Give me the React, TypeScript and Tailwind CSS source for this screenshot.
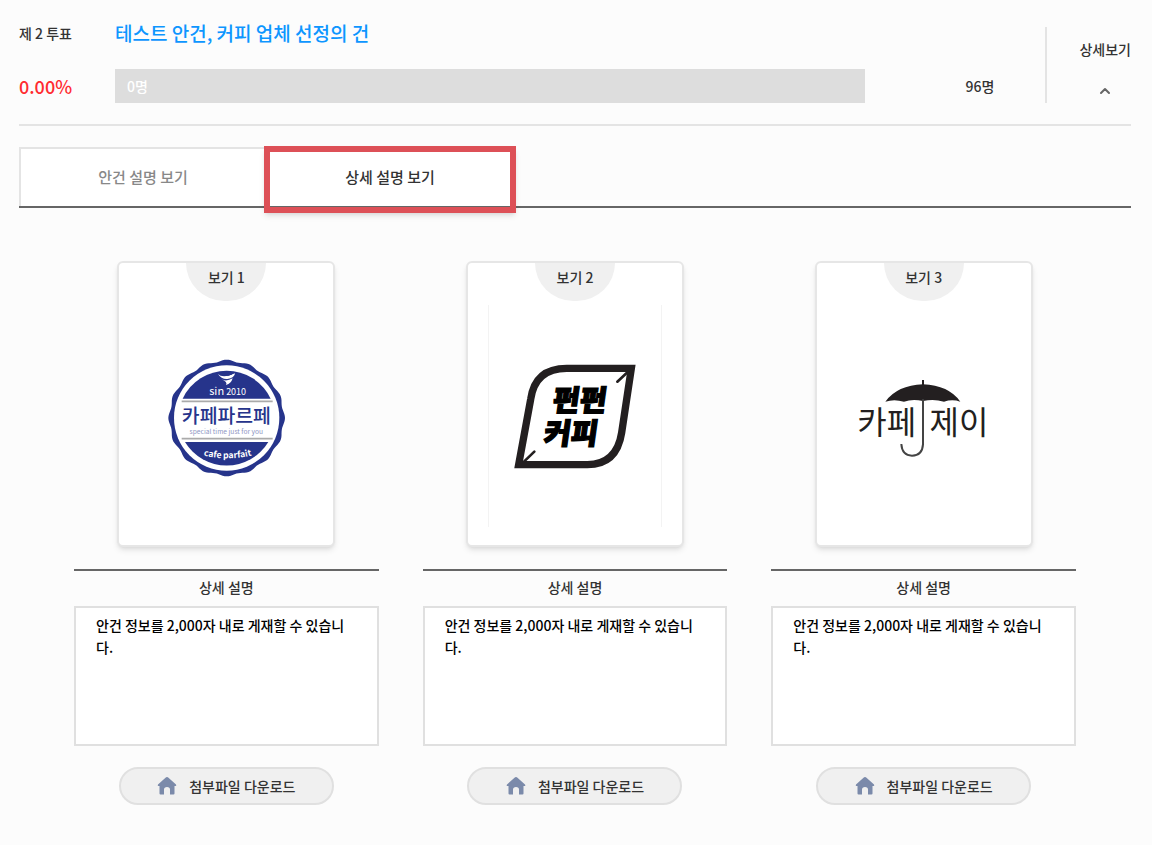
import React, { useState } from "react";
import { ChevronUp } from "lucide-react";

const FONT = "font-['Noto_Sans_CJK_KR',sans-serif]";

// Wavy outline of the round stamp logo
const stampPath = (cx: number, cy: number, radius: number, depth: number, waves: number) => {
    const points: string[] = [];
    for (let i = 0; i < 360; i += 2) {
        const angle = (i * Math.PI) / 180;
        const r = radius - depth + depth * Math.cos(angle * waves);
        points.push(`${(cx + r * Math.cos(angle)).toFixed(1)} ${(cy + r * Math.sin(angle)).toFixed(1)}`);
    }
    return `M${points.join("L")}Z`;
};

function ParfaitLogo() {
    return (
        <svg width="140" height="140" viewBox="0 0 420 420" role="img" className={FONT}>
            <path d={stampPath(212, 216, 175, 3, 16)} fill="#26348b" />
            <circle cx="212" cy="216" r="158" fill="#fff" />
            <path d="M80 158A146 146 0 0 1 344 158Z" fill="#26348b" />
            <path d="M87 288H337A146 146 0 0 1 87 288Z" fill="#26348b" />
            <path d="M77 166H350M77 278H350" stroke="#aaa" strokeWidth="5" />
            <path d="M186 84Q200 98 237 82Q236 96 214 99Q196 100 186 84Z" fill="#fff" />
            <path d="M196 100Q212 108 230 97Q226 112 210 117Q216 108 196 100Z" fill="#fff" />
            <path d="M202 86Q216 92 228 84" fill="none" stroke="#26348b" strokeWidth="3" />
            <text x="215" y="147" textAnchor="middle" fontSize="27" fill="#fff">
                <tspan fontSize="33">sin</tspan> 2010
            </text>
            <text x="211" y="231" textAnchor="middle" fontSize="58" fontWeight="500" fill="#26348b">카페파르페</text>
            <text x="211" y="265" textAnchor="middle" fontSize="20" fill="#8f97c4">special time just for you</text>
            <path id="stamp-curve" d="M120 322Q215 352 310 322" fill="none" />
            <text fontSize="26" fontWeight="700" fill="#fff" textAnchor="middle">
                <textPath href="#stamp-curve" startOffset="50%">cafe parfait</textPath>
            </text>
        </svg>
    );
}

function PunpunLogo() {
    return (
        <svg width="150" height="130" viewBox="0 0 450 390" role="img" className={FONT}>
            <path
                d="M394 52H200Q105 52 92 145L56 341H262Q350 341 365 245Z"
                fill="none"
                stroke="#231f20"
                strokeWidth="22"
            />
            <path d="M352 92L384 62M72 332L103 302" stroke="#231f20" strokeWidth="8" strokeLinecap="round" />
            <g fontSize="88" fontWeight="900" fill="#000" stroke="#000" strokeWidth="4" textAnchor="middle">
                <text x="261" y="180" transform="skewX(-8)">펀펀</text>
                <text x="248" y="278" transform="skewX(-8)">커피</text>
            </g>
        </svg>
    );
}

function CafeJLogo() {
    return (
        <svg width="160" height="100" viewBox="0 0 480 300" role="img" className={FONT}>
            <path d="M237 42V60" stroke="#231f20" strokeWidth="6" />
            <path
                d="M124 107Q160 58 237 55Q314 58 349 107Q325 99 300 107Q270 98 237 105Q205 98 180 107Q150 98 124 107Z"
                fill="#231f20"
            />
            <path d="M237 100V235Q235 268 204 269Q174 268 172 234" fill="none" stroke="#444" strokeWidth="6" />
            <g fontSize="96" fontWeight="400" fill="#231f20" textAnchor="middle">
                <text x="128" y="204">카페</text>
                <text x="345" y="204">제이</text>
            </g>
        </svg>
    );
}

function HomeIcon() {
    return (
        <svg width="20" height="20" viewBox="0 0 20 20" fill="#7b8aaa" aria-hidden="true">
            <path d="M10 1Q10.800 1 11.500 1.700L19 8.500Q19.800 10 18.500 10H17.500V17.500Q17.500 18.500 16.500 18.500H13V13.500Q13 11 10 11Q7 11 7 13.500V18.500H3.500Q2.500 18.500 2.500 17.500V10H1.500Q.200 10 1 8.500L8.500 1.700Q9.200 1 10 1Z" />
        </svg>
    );
}

const choices = [
    { id: 1, logo: <ParfaitLogo />, framed: false },
    { id: 2, logo: <PunpunLogo />, framed: true },
    { id: 3, logo: <CafeJLogo />, framed: false },
];

function ChoiceCard({ choice }) {
    return (
        <div className="flex flex-col items-center">
            <div className="flex flex-col items-center w-[218px] h-[286px] bg-white border-2 border-[#e6e6e6] rounded-md shadow-md">
                <h2 className="w-20 h-[38px] pt-1 rounded-b-full bg-[#f0f0f0] text-center text-sm font-medium">
                    보기 {choice.id}
                </h2>
                <div
                    className={`flex items-center justify-center w-[174px] h-[222px] mt-1 ${
                        choice.framed ? "border-x border-[#f3f3f3]" : ""
                    }`}
                >
                    {choice.logo}
                </div>
            </div>
            <h3 className="w-full h-[37px] mt-[22px] border-t-2 border-[#666] text-center text-sm leading-8 font-medium">
                상세 설명
            </h3>
            <p className="w-full h-[140px] px-5 py-1.5 bg-white border-2 border-[#e0e0e0] text-sm leading-[22px] font-medium text-black">
                안건 정보를 2,000자 내로 게재할 수 있습니다.
            </p>
            <button
                type="button"
                className="flex items-center justify-center gap-3 w-[215px] h-[38px] mt-[21px] rounded-full border-2 border-[#e0e0e0] bg-[#f0f0f0] text-sm font-medium"
            >
                <HomeIcon />
                첨부파일 다운로드
            </button>
        </div>
    );
}

export default function App() {
    const [tab, setTab] = useState("detail");

    return (
        <main className={`min-h-screen pl-[19px] pr-[21px] pt-[27px] pb-10 bg-[#fcfcfc] text-[#333] ${FONT}`}>
            <header className="flex pb-[21px] border-b-2 border-[#e4e4e4]">
                <div className="flex flex-col justify-between flex-1 h-[76px]">
                    <div className="flex items-center h-3">
                        <span className="w-24 text-sm font-medium">제 2 투표</span>
                        <h1 className="text-[19px] font-medium text-[#0d96ff]">테스트 안건, 커피 업체 선정의 건</h1>
                    </div>
                    <div className="flex items-center">
                        <span className="w-24 text-lg font-medium text-[#ff2b30]">0.00%</span>
                        <div className="flex items-center flex-1 h-[34px] px-3 bg-[#ddd] text-sm font-medium text-white">
                            0명
                        </div>
                        <span className="w-[180px] pl-[100px] text-sm font-medium">96명</span>
                    </div>
                </div>
                <button
                    type="button"
                    className="flex flex-col items-center gap-6 pt-3 pl-8 border-l-2 border-[#e4e4e4] text-sm font-medium"
                >
                    상세보기
                    <ChevronUp size={16} strokeWidth={3} className="text-[#666]" />
                </button>
            </header>

            <div role="tablist" className="flex h-[61px] mt-[21px] border-b-2 border-[#666] text-[15px] font-medium">
                <button
                    type="button"
                    role="tab"
                    aria-selected={tab === "info"}
                    onClick={() => setTab("info")}
                    className="w-[246px] bg-white border-t-2 border-l-2 border-[#e4e4e4] text-[#888]"
                >
                    안건 설명 보기
                </button>
                <button
                    type="button"
                    role="tab"
                    aria-selected={tab === "detail"}
                    onClick={() => setTab("detail")}
                    className="relative w-[250px] bg-white border-t-2 border-white"
                >
                    상세 설명 보기
                    <span className="absolute -inset-x-px -top-[3px] -bottom-[7px] border-6 border-[#dd5057] shadow-md" />
                </button>
            </div>

            <section className="grid grid-cols-3 gap-11 mt-[53px] px-[55px]">
                {choices.map((choice) => (
                    <ChoiceCard key={choice.id} choice={choice} />
                ))}
            </section>
        </main>
    );
}
